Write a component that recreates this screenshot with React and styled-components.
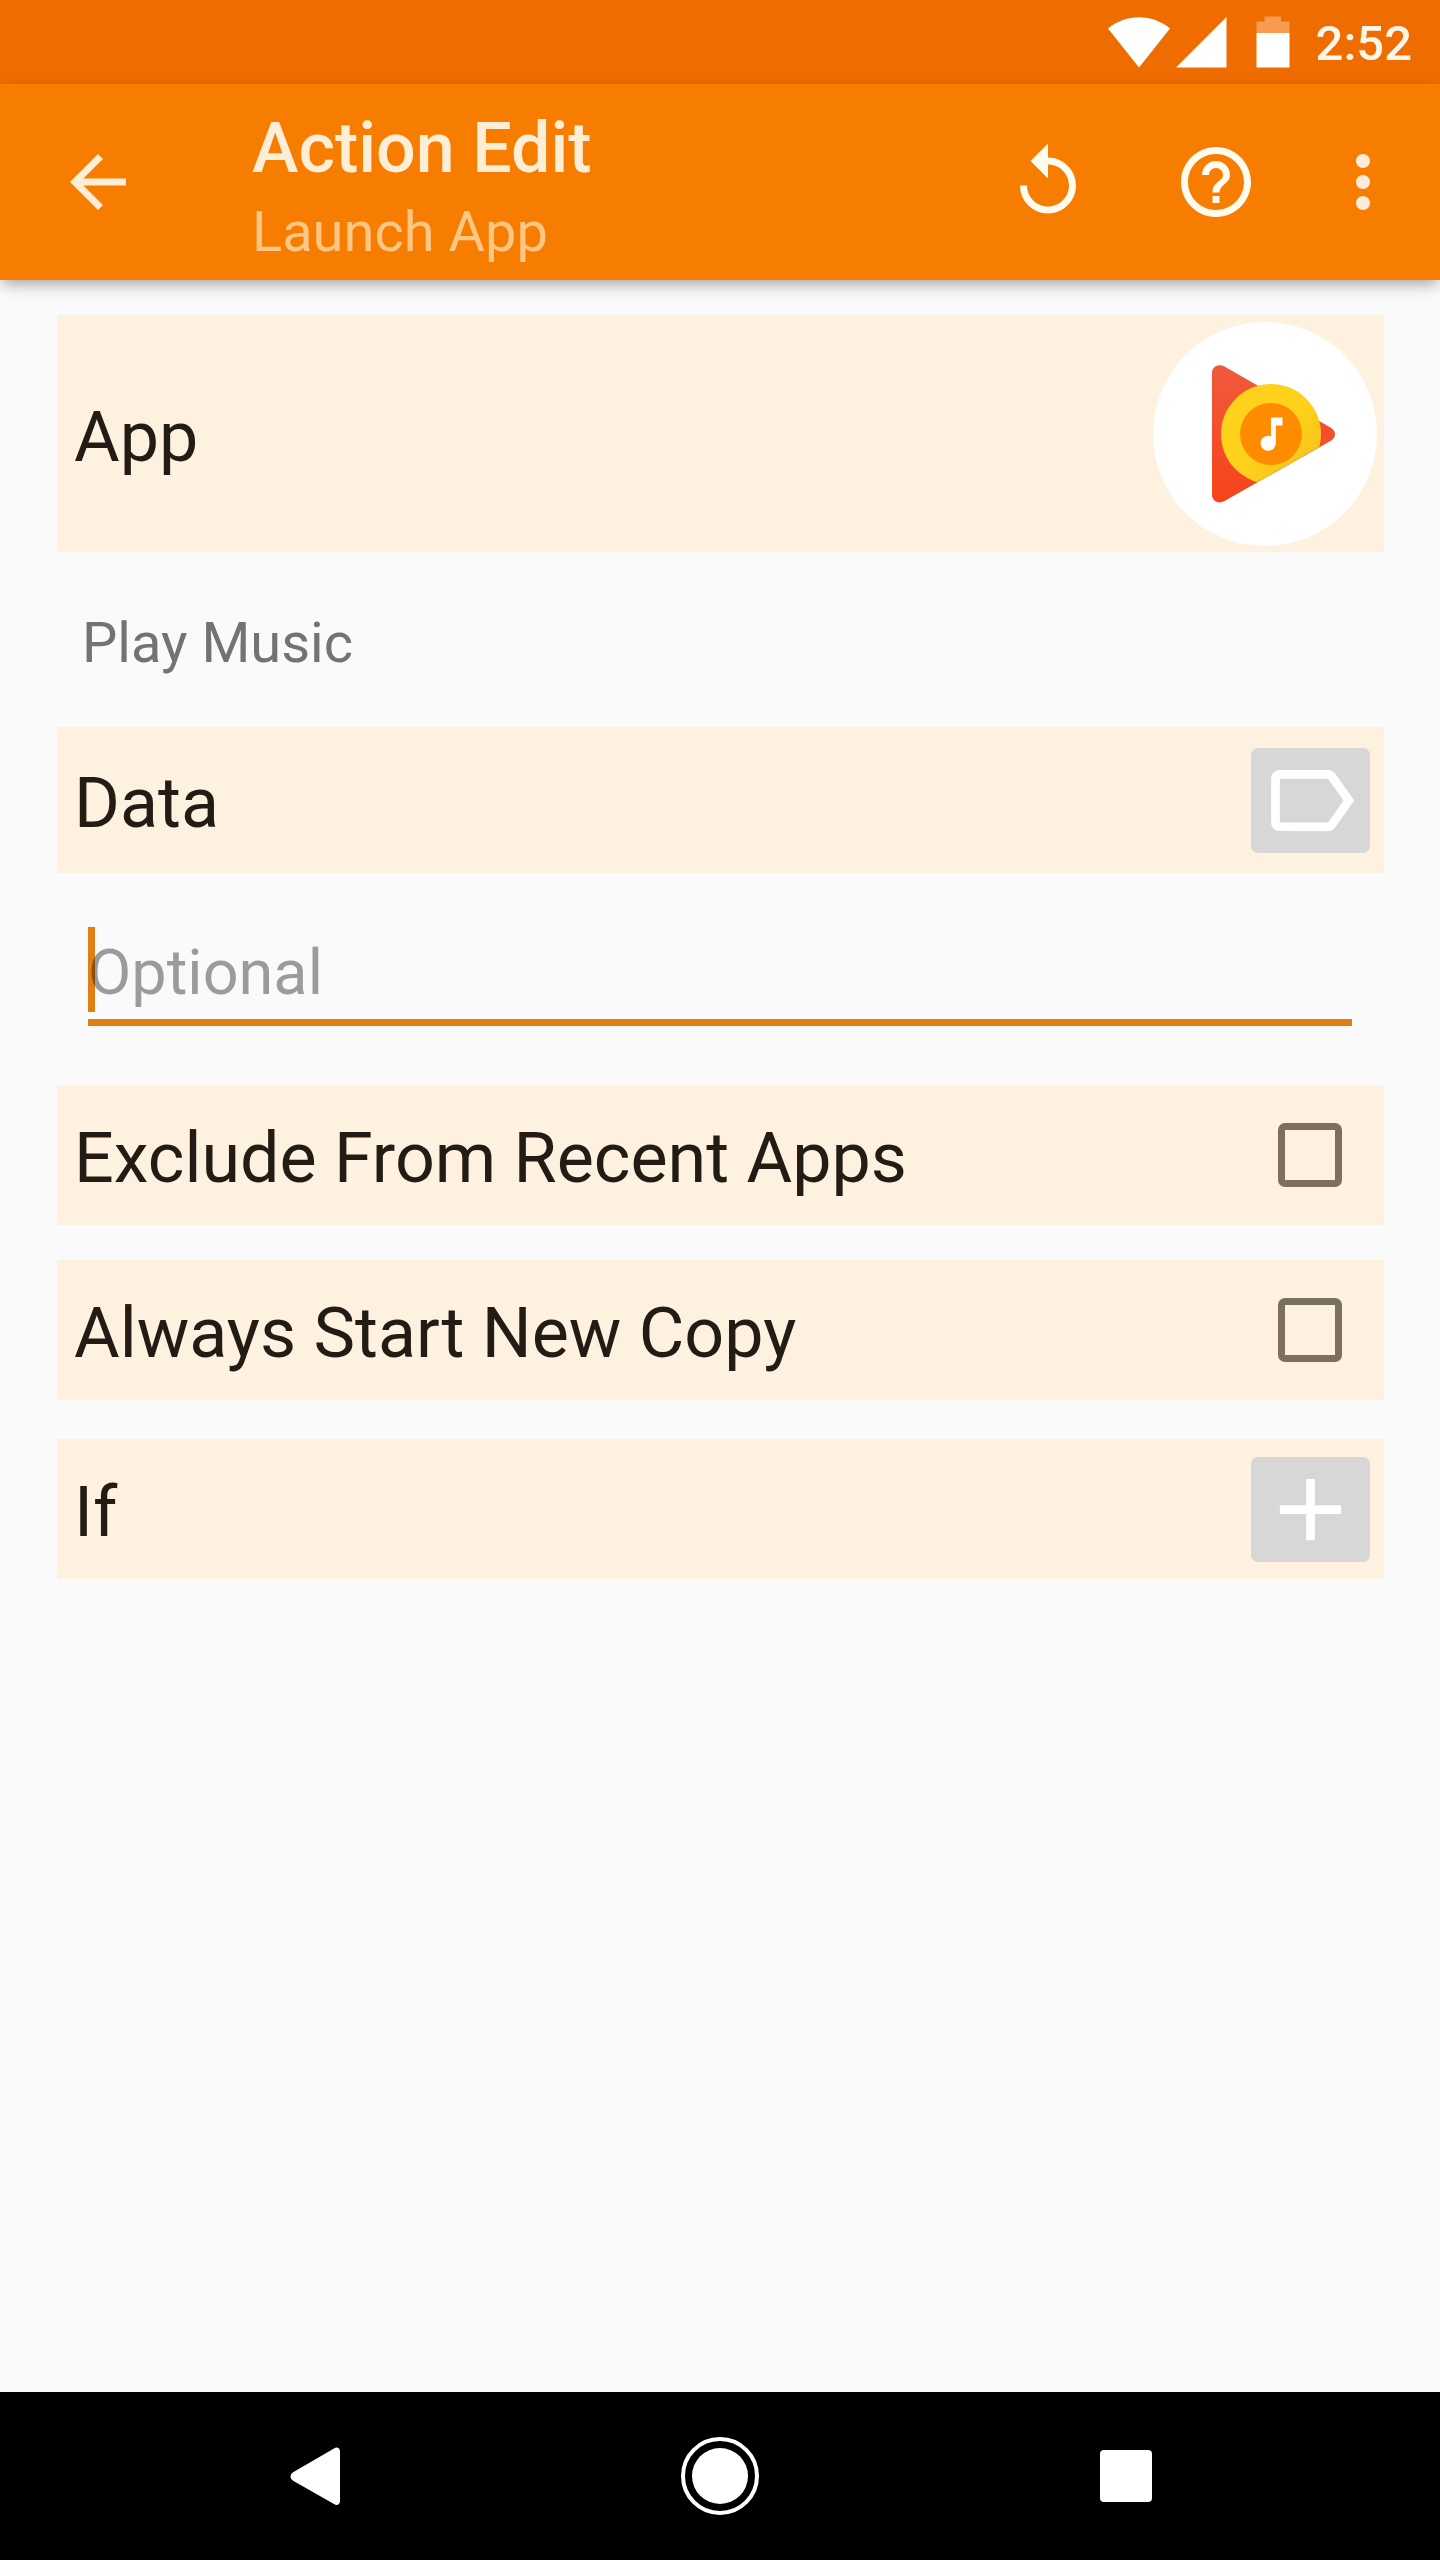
import React, { useState } from "react";
import styled, { createGlobalStyle } from "styled-components";

const GlobalStyle = createGlobalStyle`
  :root {
    --status: #ef6c00;
    --primary: #f77d00;
    --accent: #e27f14;
    --row: #fff1df;
    --page: #fafafa;
    --ink: #221c15;
  }

  * {
    box-sizing: border-box;
  }

  body {
    margin: 0;
    background-color: var(--page);
    font-family: Roboto, "Liberation Sans", sans-serif;
  }

  button {
    display: flex;
    align-items: center;
    justify-content: center;
    padding: 0;
    border: none;
    background: none;
    cursor: pointer;
  }
`;

const Screen = styled.div`
  display: flex;
  flex-direction: column;
  min-height: 100vh;
`;

const StatusBar = styled.div`
  display: flex;
  align-items: center;
  justify-content: flex-end;
  height: 84px;
  padding-right: 28px;
  background-color: var(--status);
`;

const StatusIcons = styled.svg`
  display: block;
  width: 182px;
  height: 52px;
  margin-right: 26px;
`;

const Clock = styled.time`
  padding-top: 4px;
  font-size: 49px;
  font-weight: 500;
  line-height: 56px;
  color: #fff6e8;
`;

const AppBar = styled.header`
  display: flex;
  align-items: center;
  height: 196px;
  padding: 0 14px 0 0;
  background-color: var(--primary);
  box-shadow: 0 6px 14px -2px rgba(0, 0, 0, 0.35);
`;

const BarButton = styled.button`
  flex: none;
  width: ${(props) => props.$width || 168}px;
  height: 168px;
  color: ${(props) => props.$color || "#fffbef"};
`;

const BackButton = styled(BarButton)`
  margin-right: 56px;
`;

const Titles = styled.div`
  flex: 1;
  min-width: 0;
  padding-top: 10px;
`;

const Title = styled.h1`
  margin: 0;
  font-size: 70px;
  font-weight: 500;
  line-height: 90px;
  color: #ffeed6;
`;

const Subtitle = styled.p`
  margin: 0;
  font-size: 56px;
  line-height: 78px;
  color: #ffc684;
`;

const Icon = styled.svg`
  display: block;
  width: ${(props) => props.$size}px;
  height: ${(props) => props.$size}px;
  fill: currentColor;
`;

const Content = styled.main`
  flex: 1;
  padding: 35px 56px 35px 57px;
`;

const Row = styled.div`
  display: flex;
  align-items: center;
  justify-content: space-between;
  min-height: ${(props) => props.$height || 140}px;
  padding: 0 ${(props) => props.$end || 14}px 0 17px;
  background-color: var(--row);
`;

const RowLabel = styled.label`
  flex: 1;
  padding-top: 6px;
  font-size: 70px;
  line-height: 82px;
  color: var(--ink);
`;

const AppButton = styled.button`
  width: 224px;
  height: 224px;
  border-radius: 50%;
  background-color: #fff;
`;

const AppName = styled.p`
  margin: 0;
  padding: 58px 25px 51px;
  font-size: 56px;
  line-height: 66px;
  color: #737373;
`;

const GreyButton = styled.button`
  width: 119px;
  height: 105px;
  border-radius: 7px;
  background-color: #d7d7d7;
  color: #fff;
`;

const Field = styled.div`
  position: relative;
  margin: 54px 32px 59px 31px;
`;

const Caret = styled.span`
  position: absolute;
  top: 0;
  left: 0;
  width: 7px;
  height: 85px;
  background-color: var(--accent);
`;

const TextInput = styled.input`
  position: relative;
  display: block;
  width: 100%;
  height: 99px;
  padding: 0 0 2px;
  border: none;
  border-bottom: 7px solid var(--accent);
  border-radius: 0;
  outline: none;
  background-color: transparent;
  font-family: inherit;
  font-size: 63px;
  color: var(--ink);
  caret-color: var(--accent);

  &::placeholder {
    color: rgba(0, 0, 0, 0.38);
    opacity: 1;
  }
`;

const Options = styled.div`
  display: flex;
  flex-direction: column;
  gap: 35px;
  margin-bottom: 39px;
`;

const Checkbox = styled.input`
  appearance: none;
  width: 64px;
  height: 64px;
  margin: 0;
  border: 7px solid #7b6f62;
  border-radius: 7px;
  cursor: pointer;

  &:checked {
    border-color: var(--accent);
    background-color: var(--accent);
  }
`;

const NavBar = styled.nav`
  display: flex;
  align-items: center;
  justify-content: space-between;
  height: 168px;
  padding: 0 16%;
  background-color: #000;
`;

const NavButton = styled.button`
  width: 168px;
  height: 168px;
  color: #fff;
`;

function StatusBarIcons() {
  return (
    <StatusIcons viewBox="0 0 182 52" fill="#fff" aria-hidden="true">
      <path d="M31 51.500L0 12.500C18-2.500 44-2.500 62 12.500Z" />
      <path d="M68 51.500H118.500V1Z" />
      <path d="M156.500 0.500V5.500H148.500V17H181.500V5.500H173V0.500Z" fill="#f69b4f" />
      <path d="M148.500 17H181.500V51.500H148.500Z" />
    </StatusIcons>
  );
}

function MaterialIcon({ size = 84, d }) {
  return (
    <Icon viewBox="0 0 24 24" $size={size} aria-hidden="true">
      <path d={d} />
    </Icon>
  );
}

function PlayMusicIcon() {
  return (
    <Icon viewBox="0 0 224 224" $size={224} aria-hidden="true">
      <defs>
        <linearGradient id="play" x1="0" y1="0" x2="0" y2="1">
          <stop offset="0" stopColor="#ef5a3c" />
          <stop offset="1" stopColor="#f8431a" />
        </linearGradient>
        <linearGradient id="disc" x1="0" y1="0" x2="1" y2="1">
          <stop offset="0" stopColor="#fdd01c" />
          <stop offset="0.5" stopColor="#ffd21a" />
          <stop offset="1" stopColor="#f3bd1c" />
        </linearGradient>
        <clipPath id="lower-edge">
          <path d="M0 0H224V90L178.500 118L71 179L0 219Z" />
        </clipPath>
      </defs>
      <path
        d="M59 51C59 44.500 65.500 41.500 71.500 44.500L177.500 105.500C183.500 109 183.500 115.500 177.500 119L71.500 179C65.500 182.500 59 179 59 172.500Z"
        fill="url(#play)"
      />
      <g clipPath="url(#lower-edge)">
        <circle cx="118" cy="112" r="50" fill="url(#disc)" />
      </g>
      <circle cx="118" cy="112" r="31" fill="#ff8c00" />
      <path
        d="M118 95.500H129.500V103.500H122.800V121.300A7.600 7.600 0 1 1 118 114.200Z"
        fill="#fff"
      />
    </Icon>
  );
}

export default function App() {
  const [data, setData] = useState("");
  const [exclude, setExclude] = useState(false);
  const [newCopy, setNewCopy] = useState(false);

  return (
    <Screen>
      <GlobalStyle />
      <StatusBar>
        <StatusBarIcons />
        <Clock>2:52</Clock>
      </StatusBar>

      <AppBar>
        <BackButton $width={196} $color="#ffeed6" aria-label="Back">
          <MaterialIcon d="M20 11H7.830l5.590-5.590L12 4l-8 8 8 8 1.410-1.410L7.830 13H20v-2z" />
        </BackButton>
        <Titles>
          <Title>Action Edit</Title>
          <Subtitle>Launch App</Subtitle>
        </Titles>
        <BarButton aria-label="Revert">
          <MaterialIcon d="M12 5V1L7 6l5 5V7c3.310 0 6 2.690 6 6s-2.690 6-6 6-6-2.690-6-6H4c0 4.420 3.580 8 8 8s8-3.580 8-8-3.580-8-8-8z" />
        </BarButton>
        <BarButton aria-label="Help">
          <MaterialIcon d="M11 18h2v-2h-2v2zm1-16C6.480 2 2 6.480 2 12s4.480 10 10 10 10-4.480 10-10S17.520 2 12 2zm0 18c-4.410 0-8-3.590-8-8s3.590-8 8-8 8 3.590 8 8-3.590 8-8 8zm0-14c-2.210 0-4 1.790-4 4h2c0-1.100.9-2 2-2s2 .9 2 2c0 2-3 1.750-3 5h2c0-2.250 3-2.500 3-5 0-2.210-1.790-4-4-4z" />
        </BarButton>
        <BarButton $width={126} $color="#fdebd9" aria-label="More options">
          <MaterialIcon d="M12 8c1.100 0 2-.9 2-2s-.9-2-2-2-2 .9-2 2 .9 2 2 2zm0 2c-1.100 0-2 .9-2 2s.9 2 2 2 2-.9 2-2-.9-2-2-2zm0 6c-1.100 0-2 .9-2 2s.9 2 2 2 2-.9 2-2-.9-2-2-2z" />
        </BarButton>
      </AppBar>

      <Content>
        <Row $height={237} $end={7}>
          <RowLabel htmlFor="app">App</RowLabel>
          <AppButton id="app">
            <PlayMusicIcon />
          </AppButton>
        </Row>
        <AppName>Play Music</AppName>

        <Row $height={146}>
          <RowLabel htmlFor="data">Data</RowLabel>
          <GreyButton aria-label="Insert variable">
            <MaterialIcon
              size={105}
              d="M17.630 5.840C17.270 5.330 16.670 5 16 5L5 5.010C3.900 5.010 3 5.900 3 7v10c0 1.100.9 1.990 2 1.990L16 19c.67 0 1.270-.33 1.630-.84L22 12l-4.370-6.160zM16 17H5V7h11l3.550 5L16 17z"
            />
          </GreyButton>
        </Row>
        <Field>
          <Caret />
          <TextInput
            id="data"
            type="text"
            value={data}
            placeholder="Optional"
            onChange={(e) => setData(e.target.value)}
          />
        </Field>

        <Options>
          <Row $end={42}>
            <RowLabel htmlFor="exclude">Exclude From Recent Apps</RowLabel>
            <Checkbox
              id="exclude"
              type="checkbox"
              checked={exclude}
              onChange={(e) => setExclude(e.target.checked)}
            />
          </Row>
          <Row $end={42}>
            <RowLabel htmlFor="new-copy">Always Start New Copy</RowLabel>
            <Checkbox
              id="new-copy"
              type="checkbox"
              checked={newCopy}
              onChange={(e) => setNewCopy(e.target.checked)}
            />
          </Row>
        </Options>

        <Row>
          <RowLabel htmlFor="condition">If</RowLabel>
          <GreyButton id="condition">
            <MaterialIcon size={105} d="M19 13h-6v6h-2v-6H5v-2h6V5h2v6h6v2z" />
          </GreyButton>
        </Row>
      </Content>

      <NavBar>
        <NavButton aria-label="Back">
          <Icon viewBox="0 0 84 84" $size={84} aria-hidden="true">
            <path d="M21.500 38L62 14.500C65 12.500 68 14 68 17.500V67C68 70.500 65 72 62 70L21.500 47C17.500 44.500 17.500 40.500 21.500 38Z" />
          </Icon>
        </NavButton>
        <NavButton aria-label="Home">
          <Icon viewBox="0 0 84 84" $size={84} aria-hidden="true">
            <circle cx="42" cy="42" r="37" fill="none" stroke="#fff" strokeWidth="4" />
            <circle cx="42" cy="42" r="28" />
          </Icon>
        </NavButton>
        <NavButton aria-label="Recent apps">
          <Icon viewBox="0 0 84 84" $size={84} aria-hidden="true">
            <rect x="16" y="16" width="52" height="52" rx="4" />
          </Icon>
        </NavButton>
      </NavBar>
    </Screen>
  );
}
